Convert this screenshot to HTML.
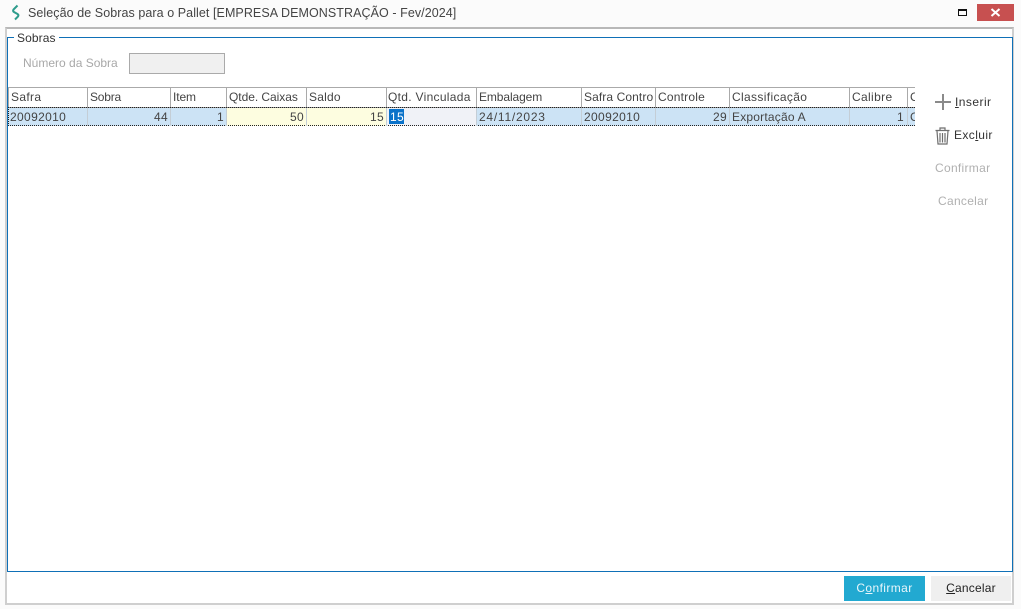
<!DOCTYPE html>
<html><head><meta charset="utf-8"><style>
html,body{margin:0;padding:0;width:1021px;height:609px;overflow:hidden;background:#fbfbfb;font-family:"Liberation Sans",sans-serif;font-size:12px;color:#333}
div,span{position:absolute;white-space:nowrap;box-sizing:border-box}
u{text-decoration:underline}
.h{top:88px;height:18px;line-height:18px;color:#444;letter-spacing:.2px}
.c{top:108px;height:18px;line-height:18px;color:#444;letter-spacing:.35px}
.v{width:1px;background:#aaa;top:87px;height:20px}
.w{width:1px;background:#c4ced6;top:108px;height:18px}
.r{text-align:right}
.g{color:#b0b0b0;letter-spacing:.3px}
</style></head><body>
<svg style="position:absolute;left:10px;top:4px" width="12" height="17" viewBox="0 0 12 17"><path d="M7.5 1.5 L3.5 5.5 Q2.5 7 4 8 L7.5 10 Q9 11 8 12.5 L5 15.5" fill="none" stroke="#2e9c8c" stroke-width="2"/></svg>
<div style="left:28px;top:4px;height:18px;line-height:18px;font-size:12.5px;color:#444;letter-spacing:.07px">Seleção de Sobras para o Pallet [EMPRESA DEMONSTRAÇÃO - Fev/2024]</div>
<div style="left:958px;top:9px;width:9px;height:7px;border:1px solid #111;border-top:2px solid #111"></div>
<div style="left:977px;top:4px;width:37px;height:17px;background:#c75050"></div>
<svg style="position:absolute;left:977px;top:4px" width="37" height="17"><path d="M14.5 5 L22.5 12 M22.5 5 L14.5 12" stroke="#fff" stroke-width="2"/></svg>

<div style="left:5px;top:27px;width:1009px;height:578px;background:#fff;border:2px solid #cfcfcf;border-top-color:#b8b8b8"></div>
<div style="left:7px;top:37px;width:1006px;height:535px;border:1px solid #0f70b7"></div>
<div style="left:14px;top:30px;width:45px;height:15px;background:#fff"></div>
<div style="left:17px;top:30px;height:16px;line-height:16px;color:#333;letter-spacing:.1px">Sobras</div>
<div style="left:23px;top:54px;height:18px;line-height:18px;color:#a8a8a8;letter-spacing:0">Número da Sobra</div>
<div style="left:129px;top:53px;width:96px;height:21px;background:#f0f0f0;border:1px solid #aaa"></div>

<div style="left:8px;top:87px;width:907px;height:1px;background:#aaa"></div>
<div style="left:8px;top:107px;width:907px;height:1px;background:#999"></div>
<div style="left:8px;top:108px;width:907px;height:18px;background:#cce3f5"></div>
<div style="left:227px;top:108px;width:160px;height:18px;background:#fdfde0"></div>
<div style="left:387px;top:108px;width:89px;height:18px;background:#f0f2f7"></div>
<div style="left:8px;top:107px;width:907px;height:0;border-top:1px dotted #222"></div>
<div style="left:8px;top:125px;width:907px;height:0;border-top:1px dotted #222"></div>
<div style="left:8px;top:107px;width:0;height:19px;border-left:1px dotted #222"></div>

<div class="v" style="left:8px"></div><div class="v" style="left:87px"></div><div class="v" style="left:170px"></div><div class="v" style="left:226px"></div><div class="v" style="left:306px"></div><div class="v" style="left:386px"></div><div class="v" style="left:476px"></div><div class="v" style="left:581px"></div><div class="v" style="left:655px"></div><div class="v" style="left:729px"></div><div class="v" style="left:849px"></div><div class="v" style="left:907px"></div>
<div class="w" style="left:87px"></div><div class="w" style="left:170px"></div><div class="w" style="left:226px"></div><div class="w" style="left:306px"></div><div class="w" style="left:386px"></div><div class="w" style="left:476px"></div><div class="w" style="left:581px"></div><div class="w" style="left:655px"></div><div class="w" style="left:729px"></div><div class="w" style="left:849px"></div><div class="w" style="left:907px"></div>

<div class="h" style="left:11px;letter-spacing:.35px">Safra</div>
<div class="h" style="left:90px;letter-spacing:-.2px">Sobra</div>
<div class="h" style="left:173px;letter-spacing:-.1px">Item</div>
<div class="h" style="left:229px;letter-spacing:-.05px">Qtde. Caixas</div>
<div class="h" style="left:309px">Saldo</div>
<div class="h" style="left:388px;letter-spacing:.3px">Qtd. Vinculada</div>
<div class="h" style="left:479px;letter-spacing:-.1px">Embalagem</div>
<div class="h" style="left:584px;width:69px;overflow:hidden;letter-spacing:.1px">Safra Contro</div>
<div class="h" style="left:658px;letter-spacing:.2px">Controle</div>
<div class="h" style="left:732px;letter-spacing:.35px">Classificação</div>
<div class="h" style="left:852px;letter-spacing:.35px">Calibre</div>
<div class="h" style="left:910px;width:5px;overflow:hidden">C</div>

<div class="c" style="left:10px">20092010</div>
<div class="c r" style="left:88px;width:80px">44</div>
<div class="c r" style="left:171px;width:53px">1</div>
<div class="c r" style="left:227px;width:77px">50</div>
<div class="c r" style="left:307px;width:77px">15</div>
<div style="left:389px;top:109px;width:15px;height:15px;background:#0a72c9"></div>
<div class="c" style="left:390px;color:#fff">15</div>
<div class="c" style="left:479px;letter-spacing:.75px">24/11/2023</div>
<div class="c" style="left:584px">20092010</div>
<div class="c r" style="left:656px;width:71px">29</div>
<div class="c" style="left:732px;letter-spacing:.2px">Exportação A</div>
<div class="c r" style="left:850px;width:54px">1</div>
<div class="c" style="left:910px;width:5px;overflow:hidden">C</div>

<svg style="position:absolute;left:935px;top:94px" width="16" height="16"><path d="M0 8H16M8 0V16" stroke="#8a8a8a" stroke-width="2"/></svg>
<div style="left:955px;top:93px;height:18px;line-height:18px;color:#333;letter-spacing:.45px"><u>I</u>nserir</div>
<svg style="position:absolute;left:935px;top:127px" width="15" height="18" viewBox="0 0 15 18"><path d="M.5 3.5H14.5M5 3V1H10V3M2 4L3 17H12L13 4M5 6V15.5M7.5 6V15.5M10 6V15.5" fill="none" stroke="#6e6e6e" stroke-width="1.2"/></svg>
<div style="left:954px;top:126px;height:18px;line-height:18px;color:#333;letter-spacing:.4px">Exc<u>l</u>uir</div>
<div class="g" style="left:935px;top:159px;height:18px;line-height:18px">Confirmar</div>
<div class="g" style="left:938px;top:192px;height:18px;line-height:18px">Cancelar</div>

<div style="left:844px;top:576px;width:81px;height:25px;background:#22a9d1;color:#e8f6fb;text-align:center;line-height:25px;letter-spacing:.4px">C<u>o</u>nfirmar</div>
<div style="left:931px;top:576px;width:80px;height:25px;background:#efefef;color:#222;text-align:center;line-height:25px;letter-spacing:.2px"><u>C</u>ancelar</div>
</body></html>
